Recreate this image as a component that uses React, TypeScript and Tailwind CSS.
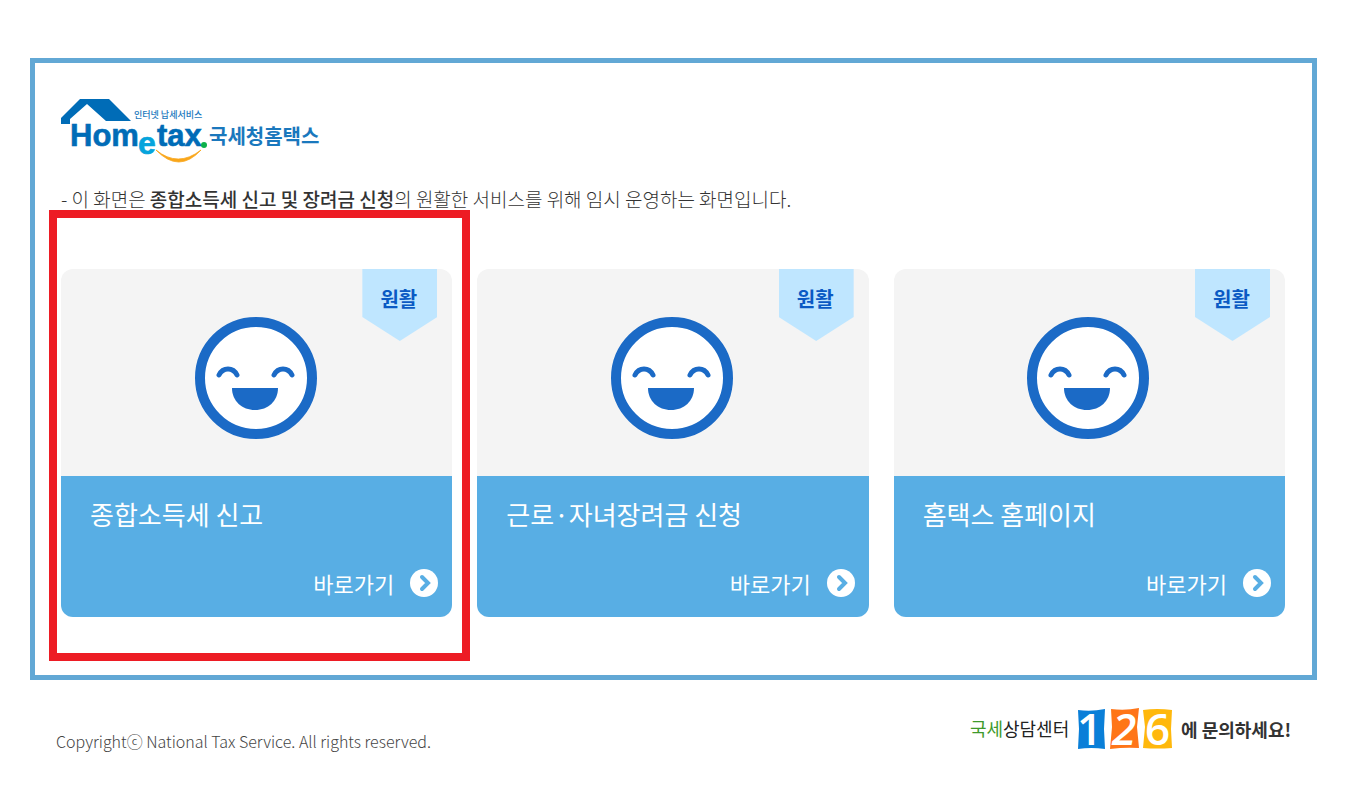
const services = [
  { title: '종합소득세 신고', href: '#income-tax', active: true },
  { title: '근로·자녀장려금 신청', href: '#incentive', active: false },
  { title: '홈택스 홈페이지', href: '#home', active: false },
];

const HometaxLogo = () => (
  <svg width="262" height="64" viewBox="0 0 262 64" role="img" aria-label="Hometax 국세청홈택스">
    <path d="M19 0H48L70 22H45L26 5L9 20V25H0V19Z" fill="#006cb7" />
    <g fontFamily="'Noto Sans CJK KR', sans-serif" fontWeight="700" fill="#1a78bd">
      <text x="73" y="19" fontSize="9" fontWeight="500">
        인터넷 납세서비스
      </text>
      <text x="148" y="45" fontSize="20">
        국세청홈택스
      </text>
    </g>
    <g fontFamily="'Liberation Sans', sans-serif" fontWeight="700" fill="#006cb7" stroke="#006cb7" strokeWidth="0.6">
      <text x="9" y="47" fontSize="31">
        Hom
      </text>
      <text x="96" y="47" fontSize="31">
        tax
      </text>
      <text x="77" y="55" fontSize="32" fill="#06a4dc" stroke="#06a4dc">
        e
      </text>
    </g>
    <circle cx="143" cy="46" r="3" fill="#0cb14b" />
    <path d="M95 51Q117 69 140 51Q118 75 95 51Z" fill="#f9a61a" stroke="#f9a61a" strokeWidth="0.8" />
  </svg>
);

const SmileIcon = () => (
  <svg width="122" height="122" viewBox="0 0 122 122" aria-hidden="true">
    <circle cx="61" cy="61" r="56" fill="#fff" stroke="#1b6ac6" strokeWidth="10" />
    <path
      d="M24 58C28 50 38 50 42 58M79 58C83 50 93 50 97 58"
      fill="none"
      stroke="#1b6ac6"
      strokeWidth="5"
      strokeLinecap="round"
    />
    <path d="M37 71H83C83 84 73 93 60 93S37 84 37 71Z" fill="#1b6ac6" />
  </svg>
);

const ArrowIcon = () => (
  <svg width="28" height="28" viewBox="0 0 28 28" aria-hidden="true">
    <circle cx="14" cy="14" r="14" fill="#fff" />
    <path d="M12 8L18 14L12 20" fill="none" stroke="#58aee4" strokeWidth="4" strokeLinecap="round" />
  </svg>
);

const CallCenterLogo = () => (
  <svg
    width="326"
    height="46"
    viewBox="0 0 326 46"
    className="overflow-visible"
    role="img"
    aria-label="국세상담센터 126에 문의하세요!"
  >
    <g fontFamily="'Noto Sans CJK KR', sans-serif" fontWeight="400">
      <text x="3" y="28" fontSize="18" fill="#3f9a2c">
        국세
      </text>
      <text x="36" y="28" fontSize="18" fill="#222">
        상담센터
      </text>
    </g>
    <path d="M111 2Q124 4 138 1L137 21L138 41Q124 39 111 41L112 21Z" fill="#0a7fd8" />
    <path d="M144 1Q158 3 172 0L170 19L172 40Q158 39 143 41L145 19Z" fill="#ff7518" />
    <path d="M176 2Q190 0 205 2L204 21L205 40Q190 41 176 40L178 19Z" fill="#ffb80c" />
    <g fontFamily="'Open Sans', sans-serif" fontWeight="600" fill="#fff">
      <text x="110" y="37" fontSize="44">
        1
      </text>
      <text x="145" y="37" fontSize="44" fontStyle="italic">
        2
      </text>
      <text x="178" y="37" fontSize="44">
        6
      </text>
    </g>
    <text x="214" y="29" fontSize="18" fontWeight="700" fill="#333" fontFamily="'Noto Sans CJK KR', sans-serif">
      에 문의하세요!
    </text>
  </svg>
);

const ServiceCard = ({ title, href, active }: (typeof services)[0]) => (
  <div className="relative">
    <a href={href} className="block overflow-hidden rounded-xl">
      <div className="relative flex h-[207px] items-center justify-center bg-[#f4f4f4] pt-[10px] pr-[2px]">
        <SmileIcon />
        {/* Status ribbon */}
        <span className="absolute top-0 right-[15px] flex h-[72px] w-[75px] justify-center bg-[#bfe6ff] pt-4 pr-[2px] text-xl leading-7 font-bold text-[#0a5ac4] [clip-path:polygon(0_0,100%_0,100%_48px,50%_100%,0_48px)]">
          원활
        </span>
      </div>
      <div className="bg-[#58aee4] pt-[18px] pr-[14px] pb-5 pl-[29px] font-normal text-white">
        <h2 className="text-[26px] leading-10">{title}</h2>
        <div className="mt-[35px] flex items-center justify-end gap-4 text-[22px] leading-7">
          바로가기
          <ArrowIcon />
        </div>
      </div>
    </a>
    {active && (
      <div className="pointer-events-none absolute -top-[59px] -right-[18px] -bottom-[44px] -left-[12px] border-8 border-[#ed1c24]" />
    )}
  </div>
);

const App = () => {
  return (
    <div className="bg-white px-[30px] pt-[58px] pb-10 font-['Noto_Sans_CJK_KR','Noto_Sans_KR',sans-serif] font-light">
      <main className="mr-4 border-5 border-[#62a8d5] pt-9 pr-[27px] pb-[58px] pl-[26px]">
        <h1>
          <HometaxLogo />
        </h1>
        <p className="mt-[22px] text-[19px] leading-7 text-[#333]">
          - 이 화면은 <strong className="font-medium">종합소득세 신고 및 장려금 신청</strong>의 원활한 서비스를 위해 임시
          운영하는 화면입니다.
        </p>
        <div className="mt-14 grid grid-cols-3 gap-[25px]">
          {services.map((service) => (
            <ServiceCard key={service.title} {...service} />
          ))}
        </div>
      </main>

      <footer className="mr-10 mt-7 flex items-center justify-between pl-[26px]">
        <p className="pt-5 text-base text-[#444]">Copyrightⓒ National Tax Service. All rights reserved.</p>
        <CallCenterLogo />
      </footer>
    </div>
  );
};

export default App;
